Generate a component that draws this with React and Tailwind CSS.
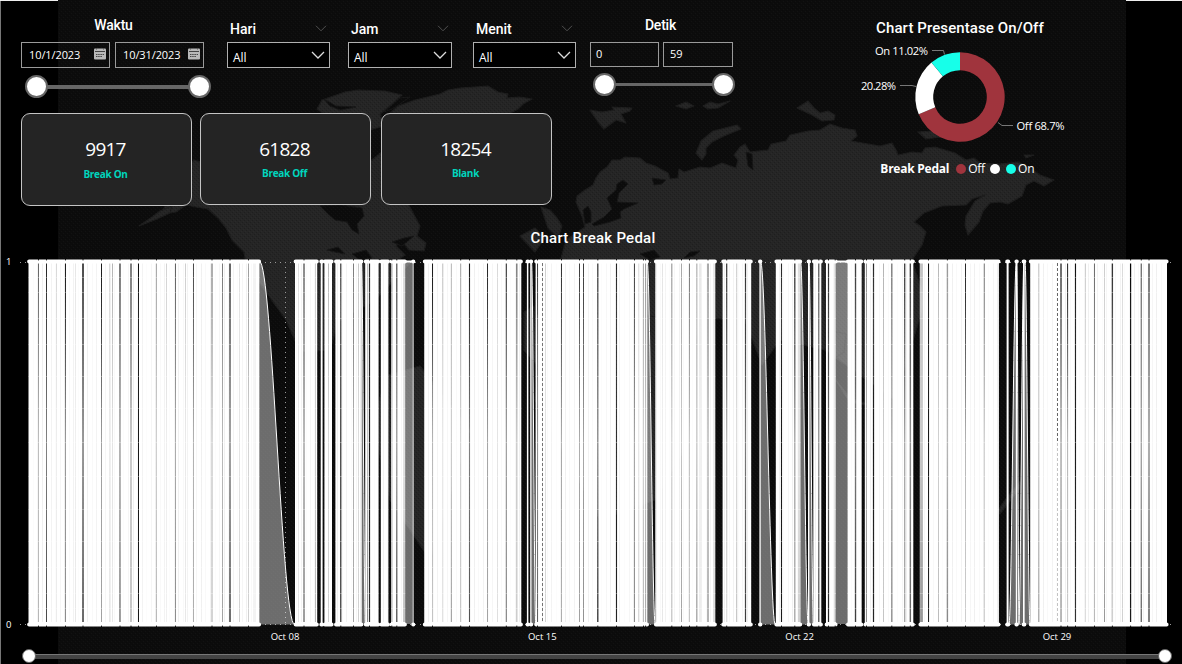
import React from "react";

const LAND = [
  // North America
  "M160 214 L172 196 L180 175 L194 160 L215 166 L260 160 L300 150 L330 140 L345 152 L372 160 L384 150 L398 166 L404 196 L420 226 L417 236 L426 243 L424 251 L409 250 L401 240 L396 246 L405 255 L395 262 L410 263 L375 300 L338 322 L330 350 L300 352 L286 320 L246 264 L244 252 L232 240 L226 228 L218 218 L208 209 L196 207 L186 205 L176 212 Z",
  "M139 226 L152 217 L160 211 L172 206 L170 213 L157 219 Z",
  "M317 109 L322 100 L345 92 L358 90 L385 91 L402 95 L392 104 L380 114 L384 126 L370 130 L340 126 Z",
  // Greenland
  "M380 122 L398 106 L415 100 L440 94 L448 90 L460 88 L488 86 L498 92 L508 94 L507 98 L520 97 L532 99 L523 104 L518 109 L502 118 L470 150 L452 180 L440 190 L426 172 L416 140 L392 118 Z",
  // Eurasia
  "M576 202 L577 196 L585 190 L593 185 L596 178 L600 172 L607 167 L612 160 L620 160 L625 157 L640 158 L646 163 L655 166 L668 173 L670 179 L678 178 L679 169 L684 172 L700 167 L710 168 L722 163 L736 168 L738 160 L734 155 L740 147 L745 144 L750 152 L768 150 L771 144 L786 141 L790 135 L808 131 L820 130 L830 124 L842 128 L855 130 L857 136 L851 141 L880 146 L892 143 L896 150 L898 155 L912 152 L922 153 L925 148 L935 147 L955 153 L966 160 L974 158 L980 163 L1000 164 L1018 162 L1030 168 L1040 175 L1054 180 L1044 186 L1034 181 L1026 185 L1022 196 L1008 204 L1000 202 L990 203 L983 211 L979 222 L968 235 L965 225 L966 216 L975 201 L985 195 L972 199 L966 205 L942 206 L924 213 L914 222 L920 226 L926 232 L922 245 L912 260 L925 300 L895 400 L825 350 L780 340 L762 365 L745 320 L700 318 L675 450 L640 430 L540 430 L536 320 L560 262 L566 240 L585 227 L582 216 Z",
  "M541 207 L550 210 L557 218 L562 226 L558 238 L548 228 Z M520 236 L535 228 L545 238 L535 252 Z",
  "M590 110 L602 112 L614 110 L612 107 L632 108 L630 111 L621 114 L626 123 L616 120 L604 129 L598 122 Z",
  "M676 106 L686 102 L694 106 L686 109 Z M703 106 L710 102 L718 104 L730 101 L718 108 L708 109 Z",
  "M696 153 L701 141 L713 131 L725 128 L737 125 L741 129 L724 136 L712 142 L706 148 L706 154 L702 160 Z",
  "M797 108 L808 101 L814 108 L820 113 L828 111 L835 115 L834 120 L822 121 L812 115 Z M918 132 L932 131 L940 137 L926 139 Z M1024 155 L1034 155 L1026 158 Z",
  // South America, Africa, islands
  "M388 375 L420 366 L470 430 L430 560 L390 500 L372 420 Z",
  "M545 310 L680 318 L690 440 L655 500 L600 520 L535 400 Z",
  "M828 330 L846 334 L844 352 L832 360 Z M836 380 L850 398 L870 405 L850 403 Z M998 510 L1008 496 L1020 482 L1020 488 L1000 514 Z M524 312 L534 306 L538 366 L524 350 Z",
];

const SEA = [
  "M320 206 L340 205 L362 208 L364 216 L357 224 L359 234 L352 230 L347 222 L335 220 L328 214 Z",
  "M327 250 L338 247 L345 254 L335 252 Z M352 254 L366 250 L372 258 L360 260 Z M392 242 L404 238 L414 236 L402 246 Z",
  "M617 184 L623 180 L628 184 L619 193 L617 202 L638 203 L624 209 L620 212 L621 218 L610 222 L594 226 L592 224 L604 217 L612 209 L607 198 L616 190 Z",
  "M583 210 L588 206 L591 212 L591 222 L585 224 Z",
  "M652 178 L666 180 L662 184 L654 185 Z M746 152 L752 154 L753 170 L748 166 Z",
  "M640 254 L654 250 L660 257 L650 260 Z M684 258 L690 252 L700 251 L694 256 Z",
  "M322 124 L350 128 L366 136 L350 132 Z M324 99 L336 106 L356 107 L340 110 L330 106 Z M384 112 L400 98 L410 97 L394 108 Z",
];

const TOP = 261.5;
const BOTTOM = 624.5;

// [start, end] of every uninterrupted run of readings
const RUNS = [
  [28.5, 259.5], [295, 317.2], [320.7, 322.6], [324.4, 332], [335.4, 361.8], [365.2, 378.6],
  [380.8, 388.4], [391, 405.3], [412.7, 413.6], [424.2, 521.3], [526.9, 528.4], [530.2, 531.6],
  [535.6, 647.4], [655.3, 715.3], [722.6, 751.2], [759.4, 760.8], [775.8, 800.6], [808, 809.4],
  [813.3, 821.3], [826, 836], [847.4, 861.7], [864.8, 913.3], [919.8, 998.9], [1006.6, 1008.6],
  [1015.8, 1017.2], [1023, 1024.8], [1030.2, 1167],
];

// [x, width, darkness at the top, darkness at the bottom]
const LINES = [
  [38.5, 1, 0.6, 0.3], [46.5, 1, 0.85, 0.75], [56.5, 1, 0.15, 0.08], [65.5, 1, 0.95, 0.5], [75.5, 1, 0.1, 0.1],
  [83, 1.7, 0.85, 0.75], [101.5, 1, 0.95, 0.4], [109.5, 1, 0.15, 0.1], [112.5, 1, 0.3, 0.1], [120, 1.5, 0.7, 0.55],
  [131, 1.6, 0.65, 0.3], [138.5, 1, 1, 1], [156.5, 1, 0.35, 0.3], [166.5, 1, 0.18, 0.06], [175.5, 1, 0.65, 0.5],
  [185.5, 1, 0.2, 0.1], [193.5, 1, 0.75, 0.35], [212, 1.5, 0.45, 0.25], [222.5, 1, 0.55, 0.4], [230, 1.8, 0.7, 0.7],
  [239.5, 1, 0.12, 0.2], [248.5, 1, 0.4, 0.2], [254, 1, 0.1, 0.1],
  [298.5, 1, 0.15, 0.12], [304, 1.4, 0.75, 0.6], [315.4, 1, 0.2, 0.3], [328.5, 1, 0.3, 0.2], [340.8, 1.1, 1, 1],
  [353.5, 1, 0.6, 0.4], [358.5, 1, 0.25, 0.2], [367.5, 1, 0.3, 0.5], [369.5, 1.2, 1, 0.9], [391.8, 1, 0.5, 0.4], [396.8, 1.1, 0.9, 0.9],
  [404, 1, 0.3, 0.5], [432.5, 1, 0.95, 0.25], [442.7, 1.3, 0.2, 0.12], [451.4, 1.2, 0.22, 0.35], [460.7, 1, 0.35, 0.25],
  [469.5, 1.1, 0.95, 0.75], [487.5, 1, 0.9, 0.4], [497.5, 1, 0.1, 0.08], [506.3, 1.1, 0.85, 0.55], [516.8, 1.3, 0.6, 0.25],
  [537.5, 1, 0.8, 0.7], [545.5, 1, 0.2, 0.2], [561.5, 1, 0.95, 0.35], [579.5, 1, 0.9, 0.4], [583.5, 1, 0.9, 0.45],
  [597.8, 1.3, 0.9, 0.9], [616.5, 1.1, 1, 0.95], [634.5, 1, 0.85, 0.5], [638.8, 1, 0.15, 0.2], [643.5, 1, 0.4, 0.3],
  [645.6, 1, 0.5, 0.4], [662.5, 1, 0.12, 0.1], [671.8, 1.1, 0.5, 0.3], [681.5, 1, 0.4, 0.4], [689.5, 1, 0.6, 0.25],
  [696.8, 1, 0.4, 0.5], [700, 1, 0.2, 0.15], [708, 1.3, 0.6, 0.5], [714, 1, 0.2, 0.3], [726.7, 1.2, 0.95, 0.15],
  [736.7, 1, 0.25, 0.3], [745.5, 1.2, 0.95, 0.85], [781.5, 1.1, 1, 1], [794.8, 1.3, 0.95, 0.4], [799, 1, 0.3, 0.4],
  [818.8, 1.1, 0.9, 0.9], [828.5, 1.2, 0.95, 0.95], [835.2, 1, 0.4, 0.5], [855.5, 1.3, 0.9, 0.85], [866.5, 1, 0.5, 0.5],
  [873.5, 1.2, 1, 0.95], [883.5, 1, 0.3, 0.2], [891.8, 1.1, 0.75, 0.6], [904.7, 1.3, 0.9, 0.4], [910.3, 1.3, 0.9, 0.7],
  [921.5, 2.8, 0.25, 0.45], [928.5, 1, 1, 0.95], [938.5, 1, 0.25, 0.25], [947.4, 1.4, 0.4, 0.5], [965.5, 1, 0.9, 0.2],
  [984.4, 1.2, 0.45, 0.2], [1038.8, 1.2, 0.2, 0.4], [1061, 1.3, 0.9, 0.45], [1067.6, 1, 0.95, 0.25],
  [1075.5, 1.1, 1, 0.9], [1085.5, 1, 0.2, 0.15], [1094.5, 1, 0.6, 0.3], [1104.5, 1, 0.2, 0.45], [1112.4, 1.3, 0.85, 0.2],
  [1122.5, 1, 0.15, 0.2], [1130.6, 1.2, 1, 0.95], [1141.3, 1.4, 0.55, 0.6], [1149, 1.5, 0.7, 0.7],
];

const FAINT = [];
for (let x = 32.5; x < 1164; x += 4.55) FAINT.push(Math.round(x) + 0.5);

const GRID_ROWS = [277, 292, 318, 344, 376, 408, 442, 476, 509, 541, 567, 593, 608];

const fall = (a, b) =>
  `M${a} ${TOP} C${a + (b - a) * 0.36} ${TOP} ${a + (b - a) * 0.64} ${BOTTOM} ${b} ${BOTTOM}`;
const rise = (a, b) =>
  `M${a} ${BOTTOM} C${a + (b - a) * 0.36} ${BOTTOM} ${a + (b - a) * 0.64} ${TOP} ${b} ${TOP}`;

const FALLS = [[259.5, 294.5], [361.5, 365.4], [531.5, 535.8], [647.2, 655.2], [760.6, 775.2], [800.6, 808.2], [809, 813.4], [1016.8, 1019], [1025, 1030]];
const RISES = [[1009, 1016.4], [1018.8, 1024]];

function Backdrop() {
  return (
    <svg className="absolute inset-0" width="1182" height="664" viewBox="0 0 1182 664">
      <defs>
        <pattern id="weave" width="4" height="4" patternUnits="userSpaceOnUse">
          <rect x="0" y="0" width="1" height="1" fill="#000" />
          <rect x="2" y="2" width="1" height="1" fill="#000" />
          <rect x="1" y="3" width="1" height="1" fill="#fff" opacity=".12" />
          <rect x="3" y="1" width="1" height="1" fill="#fff" opacity=".12" />
        </pattern>
        <clipPath id="canvas">
          <rect x="58" y="0" width="1068" height="664" />
        </clipPath>
      </defs>
      <rect width="1182" height="664" fill="#000" />
      <g clipPath="url(#canvas)">
        <rect x="58" width="1068" height="664" fill="#0c0c0c" />
        {LAND.map((d) => (
          <path key={d} d={d} fill="#252525" stroke="#1d1d1d" strokeWidth="1.2" strokeLinejoin="round" />
        ))}
        {SEA.map((d) => (
          <path key={d} d={d} fill="#0c0c0c" stroke="#171717" strokeWidth="1" />
        ))}
        <rect x="58" width="1068" height="664" fill="url(#weave)" opacity=".2" />
      </g>
      <rect x="0" y="0" width="58" height="1" fill="#eee" />
      <rect x="1126" y="0" width="56" height="1" fill="#eee" />
      <rect x="0" y="1" width="1" height="663" fill="#777" />
    </svg>
  );
}

function Calendar() {
  return (
    <svg width="12" height="12" viewBox="0 0 12 12">
      <rect x="0" y="0.5" width="12" height="11" rx="1" fill="#b9b9b9" />
      <rect x="2" y="0" width="1" height="1.5" fill="#555" />
      <rect x="9" y="0" width="1" height="1.5" fill="#555" />
      <rect x="1" y="3" width="10" height="1" fill="#444" />
      <path d="M2 6.5h8M2 8.5h6" stroke="#444" strokeDasharray="1.5 .7" />
    </svg>
  );
}

function DateBox({ value }) {
  return (
    <div className="flex h-[26px] items-center justify-between border border-[#9a9a9a] pl-[7px] pr-[3px]">
      <span className="-mt-px text-[11px] font-medium leading-none tracking-[-0.1px]">{value}</span>
      <span className="-mt-[3px]"><Calendar /></span>
    </div>
  );
}

function Range({ track }) {
  return (
    <div className="flex items-center">
      <span className="z-10 size-[23px] shrink-0 rounded-full border-2 border-[#666] bg-white" />
      <span className={`-mx-1 grow bg-[#666] ${track}`} />
      <span className="z-10 size-[23px] shrink-0 rounded-full border-2 border-[#666] bg-white" />
    </div>
  );
}

function Dropdown({ label, width }) {
  return (
    <div className={`mt-[21px] ${width}`}>
      <div className="flex h-[21px] items-start justify-between px-[3px]">
        <span className="font-['Roboto',sans-serif] text-[14px] font-medium leading-[17px]">{label}</span>
        <svg className="mt-[4px]" width="12" height="7" viewBox="0 0 12 7">
          <path d="M1 .8l5 5 5-5" fill="none" stroke="#505050" strokeWidth="1" />
        </svg>
      </div>
      <div className="flex h-[26px] items-center justify-between border border-[#b0b0b0] bg-black pl-[5px] pr-[4px]">
        <span className="pt-[5px] text-[12px] font-medium leading-none">All</span>
        <svg width="14" height="8" viewBox="0 0 14 8">
          <path d="M1 1l6 6 6-6" fill="none" stroke="#ddd" strokeWidth="1.3" />
        </svg>
      </div>
    </div>
  );
}

function Card({ value, label, className, gap }) {
  return (
    <div className={`flex flex-col items-center rounded-[9px] border border-[#c4c4c4] bg-[#242424] ${className}`}>
      <span className="text-[19px] leading-[24px] tracking-[-0.75px]">{value}</span>
      <span className={`text-[10px] font-bold leading-[14px] tracking-[-0.3px] text-[#00d5bd] ${gap}`}>{label}</span>
    </div>
  );
}

const polar = (r, share) => {
  const a = share * 2 * Math.PI;
  return `${60 + r * Math.sin(a)} ${60 - r * Math.cos(a)}`;
};
const ring = (from, to) => {
  const big = to - from > 0.5 ? 1 : 0;
  return `M${polar(44.7, from)} A44.7 44.7 0 ${big} 1 ${polar(44.7, to)} L${polar(26.8, to)} A26.8 26.8 0 ${big} 0 ${polar(26.8, from)} Z`;
};

function Donut() {
  return (
    <div className="mt-[18px] flex w-[260px] flex-col items-center">
      <h2 className="font-['Roboto',sans-serif] text-[15px] font-medium leading-[20px] tracking-[0.1px]">Chart Presentase On/Off</h2>
      <svg width="260" height="108" viewBox="-70 1 260 108">
        <path d={ring(0, 0.687)} fill="#a0343d" />
        <path d={ring(0.687, 0.8898)} fill="#fff" />
        <path d={ring(0.8898, 1)} fill="#17ffe9" />
        <g fill="none" stroke="#777">
          <path d="M32 13.5h11.5l1 4" />
          <path d="M0 48.5h12l4 1" />
          <path d="M98 85.5l4 3h11" />
        </g>
        <g fill="#fff" fontSize="11.2">
          <text x="28" y="18" textAnchor="end" textLength="53">On 11.02%</text>
          <text x="-4" y="53" textAnchor="end" textLength="35">20.28%</text>
          <text x="116.5" y="93" textLength="48">Off 68.7%</text>
        </g>
      </svg>
      <div className="-ml-[5px] mt-[14px] flex h-[18px] items-center text-[12px] leading-none">
        <span className="mr-[7px] font-bold tracking-[-0.25px]">Break Pedal</span>
        <i className="mr-[2px] size-[10px] rounded-full bg-[#a0343d]" />
        <span className="mr-[5px] tracking-[-0.2px]">Off</span>
        <i className="mr-[6px] size-[10px] rounded-full bg-white" />
        <i className="mr-[2px] size-[10px] rounded-full bg-[#17ffe9]" />
        <span>On</span>
      </div>
    </div>
  );
}

function PedalChart() {
  return (
    <svg width="1182" height="380" viewBox="0 250 1182 380" className="block">
      <defs>
        {LINES.map(([x, , a, b]) => (
          <linearGradient key={x} id={`g${x * 10}`} gradientUnits="userSpaceOnUse" x1="0" y1="263" x2="0" y2="622">
            <stop offset="0" stopColor="#000" stopOpacity={a} />
            <stop offset="0.12" stopColor="#000" stopOpacity={a * 0.9} />
            <stop offset="0.5" stopColor="#000" stopOpacity={a > 0.95 ? 0.95 : a * 0.25 + b * 0.35} />
            <stop offset="1" stopColor="#000" stopOpacity={b * 0.95} />
          </linearGradient>
        ))}
        <mask id="readings" maskUnits="userSpaceOnUse" x="0" y="250" width="1182" height="380">
          {RUNS.map(([a, b]) => (
            <rect key={a} x={a} y="262" width={b - a} height="362" fill="#fff" />
          ))}
          {FAINT.map((x, i) => (
            <rect key={x} x={x - 0.5} y="263" width="1" height="359" fill="#000" opacity={0.01 + ((i * 7) % 5) * 0.012} />
          ))}
          {LINES.map(([x, w]) => (
            <rect key={x} x={x - w / 2} y="263" width={w} height="359" fill={`url(#g${x * 10})`} />
          ))}
        </mask>
      </defs>
      <g stroke="#999" strokeDasharray="1 4">
        <path d="M20 262.5H1173M20 624.5H1173" />
        <path d="M285.5 262V626" />
      </g>
      <rect x="405.3" y="262" width="7.6" height="362" fill="#fff" opacity=".4" />
      <rect x="836" y="262" width="11.4" height="362" fill="#fff" opacity=".4" />
      {FALLS.map(([a, b]) => (
        <g key={a}>
          <path d={`${fall(a, b)} L${a} ${BOTTOM} Z`} fill="#fff" opacity=".4" />
          <path d={fall(a, b)} fill="none" stroke="#fff" strokeWidth="1" />
        </g>
      ))}
      {RISES.map(([a, b]) => (
        <g key={a}>
          <path d={`${rise(a, b)} L${b} ${BOTTOM} Z`} fill="#fff" opacity=".4" />
          <path d={rise(a, b)} fill="none" stroke="#fff" strokeWidth="1" />
        </g>
      ))}
      <rect x="0" y="250" width="1182" height="380" fill="#fff" mask="url(#readings)" />
      <g stroke="#fff" opacity=".3">
        {GRID_ROWS.map((y) =>
          RUNS.filter(([a, b]) => b - a > 3).map(([a, b]) => <path key={`${a}-${y}`} d={`M${a} ${y + 0.5}H${b}`} />)
        )}
      </g>
      <g stroke="#fff" strokeWidth="4" strokeLinecap="round">
        {RUNS.map(([a, b]) => (
          <path key={a} d={`M${a + 0.6} ${TOP}H${b - 0.4}M${a + 0.6} ${BOTTOM}H${b - 0.4}`} />
        ))}
        <path d={`M405 ${TOP}H412`} strokeWidth="2" />
        <path d={`M836 ${TOP}H848`} strokeWidth="2" />
      </g>
      <g stroke="#555" strokeDasharray="3 2">
        <path d="M542.5 263V622" opacity=".8" />
        <path d="M1057.5 263V442" opacity=".9" />
        <path d="M1057.5 443V622" opacity=".35" />
      </g>
      <g stroke="#111" strokeWidth="1">
        {LINES.filter(([, , a]) => a > 0.3).map(([x]) => (
          <path key={x} d={`M${x} 259v1.4M${x} 625.6v1.4`} />
        ))}
      </g>
      <g fill="#fff" fontSize="9.5">
        <text x="6" y="265">1</text>
        <text x="6" y="628">0</text>
      </g>
    </svg>
  );
}

export default function App() {
  return (
    <div className="relative flex h-[664px] w-[1182px] flex-col overflow-hidden bg-black font-['Open_Sans','Noto_Sans',sans-serif] text-white">
      <Backdrop />
      <div className="relative flex h-[228px] pl-[21px]">
        <div className="w-[809px]">
          <div className="flex h-[113px]">
            <div className="mr-[23px] w-[183px] pt-[17px]">
              <h3 className="mb-[8px] pl-[2px] text-center font-['Roboto',sans-serif] text-[14px] font-medium leading-[17px] tracking-[-0.2px]">Waktu</h3>
              <div className="grid grid-cols-[89px_89px] gap-[5px]">
                <DateBox value="10/1/2023" />
                <DateBox value="10/31/2023" />
              </div>
              <div className="mt-[7px] w-[190px] pl-[4px]">
                <Range track="h-[4px]" />
              </div>
            </div>
            <Dropdown label="Hari" width="w-[103px] mr-[18px]" />
            <Dropdown label="Jam" width="w-[104px] mr-[21px]" />
            <Dropdown label="Menit" width="w-[103px] mr-[14px]" />
            <div className="w-[143px] pt-[17px]">
              <h3 className="mb-[8px] pr-[2px] text-center font-['Roboto',sans-serif] text-[14px] font-medium leading-[17px] tracking-[-0.2px]">Detik</h3>
              <div className="grid grid-cols-[69px_70px] gap-[4px] text-[11px]">
                <div className="flex h-[25px] items-center border border-[#9a9a9a] pl-[5px]">0</div>
                <div className="flex h-[25px] items-center border border-[#9a9a9a] pl-[6px]">59</div>
              </div>
              <div className="mt-[6px] w-[145px] pl-[3px]">
                <Range track="h-[3px]" />
              </div>
            </div>
          </div>
          <div className="flex items-start">
            <Card value="9917" label="Break On" gap="mt-[6px]" className="mr-[8px] h-[93px] w-[171px] pr-[2px] pt-[23px]" />
            <Card value="61828" label="Break Off" gap="mt-[5px]" className="mr-[10px] h-[92px] w-[171px] pr-[2px] pt-[23px]" />
            <Card value="18254" label="Blank" gap="mt-[5px]" className="h-[92px] w-[171px] pr-[2px] pt-[23px]" />
          </div>
        </div>
        <Donut />
      </div>
      <div className="relative flex flex-col">
        <h2 className="h-[22px] pl-[4px] text-center font-['Roboto',sans-serif] text-[15px] font-medium leading-[20px] tracking-[0.25px]">Chart Break Pedal</h2>
        <PedalChart />
        <div className="flex h-[16px] justify-between pl-[265px] pr-[105px] text-[9.5px] leading-[13px]">
          <span className="w-[40px] text-center">Oct 08</span>
          <span className="w-[40px] text-center">Oct 15</span>
          <span className="w-[40px] text-center">Oct 22</span>
          <span className="w-[40px] text-center">Oct 29</span>
        </div>
        <div className="flex items-center pl-[22px] pr-[10px] pt-[3px]">
          <span className="z-10 size-[14px] shrink-0 rounded-full border border-[#666] bg-white" />
          <span className="-mx-1 h-[5px] grow border-t border-[#777] bg-[#444]" />
          <span className="z-10 size-[14px] shrink-0 rounded-full border border-[#666] bg-white" />
        </div>
      </div>
    </div>
  );
}
